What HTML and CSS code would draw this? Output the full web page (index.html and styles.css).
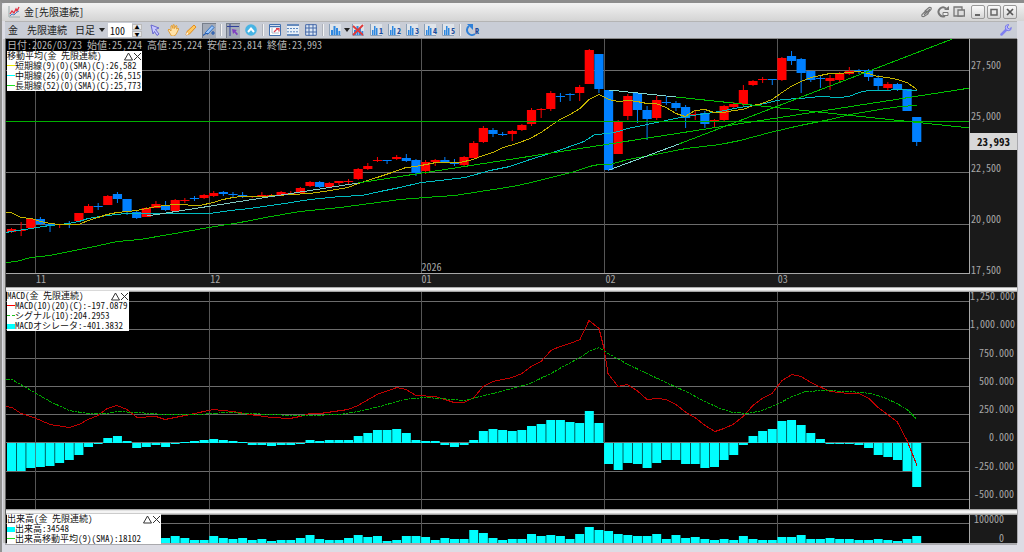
FILE: index.html
```
<!DOCTYPE html>
<html lang="ja">

<head>
    <meta charset="UTF-8">
    <meta name="viewport" content="width=device-width, initial-scale=1.0">
    <title>金[先限連続]</title>
    <link rel="stylesheet" href="styles.css">
</head>

<body>

    <div class="window">
        <div class="title-bar">
            <svg class="app-icon" viewBox="0 0 12 12"><path d="M1 0v11h11" fill="none" stroke="#9aa" /><path d="M2 8l2-3 2 2 2-4 1 2 2-4" fill="none" stroke="#e03040" stroke-width="1.3" /><path d="M2 10l2-2 2 1 3-3 2-1" fill="none" stroke="#4a80c8" /></svg>
            <h1>金[先限連続]</h1>
            <div class="title-tools">
                <button aria-label="リンク"><svg viewBox="0 0 12 12"><g fill="none" stroke="#777" stroke-width="1.1"><path d="M4 5l4-3.500q3-.5 2 2L7 7H4zM8 5l-4 .5-3 3q-1 2.500 2 2L7 8zM3 9l6-6" /></g></svg></button>
                <button aria-label="更新"><svg viewBox="0 0 12 12"><path d="M9 2.500A4.500 4.500 0 1 0 8 10" fill="none" stroke="#777" stroke-width="2" /><path d="M7 4h5V0z" fill="#777" /><path d="M6 6.500h5v3H6z" fill="#eee" stroke="#777" /></svg></button>
                <button aria-label="複製"><svg viewBox="0 0 12 12"><g fill="#ddd" stroke="#777" stroke-width="1.3"><path d="M1 1h8v9H1z" /><path d="M5 4h6.400v6H5z" /></g></svg></button>
            </div>
            <div class="window-buttons">
                <button aria-label="最小化"><svg viewBox="0 0 12 12"><path d="M3 9h5" stroke="#666" stroke-width="2" /></svg></button>
                <button aria-label="最大化"><svg viewBox="0 0 12 12"><path d="M3 3.500h6v5.500H3z" fill="none" stroke="#666" stroke-width="1.5" /></svg></button>
                <button aria-label="閉じる"><svg viewBox="0 0 12 12"><path d="M3 3l6 6M9 3l-6 6" stroke="#555" stroke-width="1.7" /></svg></button>
            </div>
        </div>

        <div class="toolbar">
            <span class="symbol">金</span>
            <span class="contract">先限連続</span>
            <select class="period" aria-label="足種">
                <option>日足</option>
            </select>
            <input class="count" type="number" value="100" aria-label="表示本数">
            <div class="spinner">
                <button aria-label="増やす">&#9650;</button>
                <button aria-label="減らす">&#9660;</button>
            </div>

            <div class="tools">
                <button aria-label="選択"><svg viewBox="0 0 12 12"><path d="M2 1l8 3-3.500 1.500L10 10l-2 1.500L5.500 7.500 4 10z" fill="#c8c8ff" stroke="#6868d0" /></svg></button>
                <button aria-label="移動"><svg viewBox="0 0 12 12"><path d="M1 6l1-1 2 2V2l1-.5 1 3V.8l1.200 0 .3 3.700L9 1.500l1 .5-.5 3L11 4l.7 1L9 10.500 7 12H4.500z" fill="#ffe2a8" stroke="#e09a30" stroke-width=".9" /></svg></button>
                <button aria-label="描画"><svg viewBox="0 0 12 12"><path d="M1 11l1-3.500L9 1l2 2-6.500 7z" fill="#ffc860" stroke="#e08c20" /><path d="M1 11l1-3 1.500 2.200z" fill="#fff" /></svg></button>
                <button class="pressed" aria-label="トレンドライン"><svg viewBox="0 0 12 12"><path d="M2 9l7-7.500 2 2L5 10z" fill="#9cc8ff" stroke="#3070c0" /><path d="M0 11.500q3-3 5-1.500M8 9h4M10 7v4" fill="none" stroke="#2058b0" stroke-width="1.2" /></svg></button>
                <span class="separator"></span>
                <button class="pressed" aria-label="カーソル"><svg viewBox="0 0 12 12"><path d="M3 0v12M0 2.500h12" stroke="#30409a" /><path d="M5 5l5 1-1.500 1.200L11 10l-1.300 1.200L7.500 8.500 6 10z" fill="#8040c0" /></svg></button>
                <button aria-label="先頭へ"><svg viewBox="0 0 12 12"><circle cx="6" cy="6" r="5.800" fill="#48b4e4" /><path d="M3 8l3-3.500L9 8" fill="none" stroke="#fff" stroke-width="2" /></svg></button>
                <span class="separator"></span>
                <button aria-label="チャート設定"><svg viewBox="0 0 12 12"><path d="M.5.5h11v11H.5z" fill="#fff" stroke="#4070b0" /><path d="M.5 2.500h11" stroke="#4070b0" stroke-width="1.5" /><path d="M3 4v5h7" fill="none" stroke="#abc" /><path d="M5 8l2-2 3-1.500M7 4.500h3v3" fill="none" stroke="#e04050" stroke-width="1.2" /></svg></button>
                <button aria-label="横グリッド"><svg viewBox="0 0 12 12"><path d="M0 0h12v12H0z" fill="#e8f0f8" /><path d="M0 1h12M0 11h12" stroke="#3a68a8" stroke-width="1.6" /><path d="M0 4.500h12M0 7.800h12" stroke="#5a88c0" stroke-dasharray="2 1" /></svg></button>
                <button aria-label="グリッド"><svg viewBox="0 0 12 12"><path d="M.7.7h10.600v10.600H.7zM0 4h12M0 8h12M4 0v12M8 0v12" fill="#dde8f4" stroke="#4468a8" /></svg></button>
                <span class="separator"></span>
                <button aria-label="チャート種類"><svg viewBox="0 0 12 12"><use href="#bars" /></svg></button>
                <span class="arrow"></span>
                <button aria-label="チャート削除"><svg viewBox="0 0 12 12"><use href="#bars" /><path d="M1 2l10 9M11 1L1 11" stroke="#e03838" stroke-width="1.8" /></svg></button>
                <button aria-label="チャート1"><svg viewBox="0 0 12 12"><use href="#short-bars" /></svg><b>1</b></button>
                <button aria-label="チャート2"><svg viewBox="0 0 12 12"><use href="#short-bars" /></svg><b>2</b></button>
                <button aria-label="チャート3"><svg viewBox="0 0 12 12"><use href="#short-bars" /></svg><b>3</b></button>
                <button aria-label="チャート4"><svg viewBox="0 0 12 12"><use href="#short-bars" /></svg><b>4</b></button>
                <button aria-label="チャート5"><svg viewBox="0 0 12 12"><use href="#short-bars" /></svg><b>5</b></button>
                <span class="separator"></span>
                <button aria-label="再読込"><svg viewBox="0 0 12 12"><path d="M3 2a5 5 0 1 0 6 8" fill="none" stroke="#2f80d8" stroke-width="2" /><path d="M1 0h6v6z" fill="#2f80d8" /></svg><b>R</b></button>
            </div>
            <button class="settings" aria-label="設定"><svg viewBox="0 0 12 12"><path d="M1.500 10.500L7 5" stroke="#8080f0" stroke-width="2.5" stroke-linecap="round" /><path d="M9 .8A3 3 0 1 0 11.300 3.500L9.500 5 7.500 4l0-2z" fill="#b8b8ff" stroke="#7070e8" stroke-width=".9" /></svg></button>
        </div>

        <div class="charts">
            <!-- Price -->
            <div class="price">
                <div class="plot">
                    <svg id="price" viewBox="6 39 963 234" preserveAspectRatio="none"></svg>
                    <p class="quote">日付:2026/03/23 始値:25,224 高値:25,224 安値:23,814 終値:23,993</p>
                    <div class="legend price-legend">
                        <div class="legend-title">移動平均(金 先限連続)
                            <span class="legend-buttons"><button aria-label="折りたたむ"><svg viewBox="0 0 9 9"><use href="#fold" /></svg></button><button aria-label="閉じる"><svg viewBox="0 0 9 9"><use href="#cross" /></svg></button></span>
                        </div>
                        <div><i class="line yellow"></i>短期線(9)(0)(SMA)(C):26,582</div>
                        <div><i class="line cyan"></i>中期線(26)(0)(SMA)(C):26,515</div>
                        <div><i class="line lime"></i>長期線(52)(0)(SMA)(C):25,773</div>
                    </div>
                </div>
                <ol class="months">
                    <li></li>
                    <li>11</li>
                    <li>12</li>
                    <li><span class="year">2026</span>01</li>
                    <li>02</li>
                    <li>03</li>
                </ol>
            </div>
            <div class="axis price-axis">
                <span>27,500</span>
                <span>25,000</span>
                <span>22,500</span>
                <span>20,000</span>
                <span>17,500</span>
                <strong class="last-price">23,993</strong>
            </div>

            <div class="splitter"></div>

            <!-- MACD -->
            <div class="plot">
                <svg id="macd" viewBox="6 292 963 217" preserveAspectRatio="none"></svg>
                <div class="legend macd-legend">
                    <div class="legend-title">MACD(金 先限連続)
                        <span class="legend-buttons"><button aria-label="折りたたむ"><svg viewBox="0 0 9 9"><use href="#fold" /></svg></button><button aria-label="閉じる"><svg viewBox="0 0 9 9"><use href="#cross" /></svg></button></span>
                    </div>
                    <div><i class="line red"></i>MACD(10)(20)(C):-197.0879</div>
                    <div><i class="line dashed"></i>シグナル(10):204.2953</div>
                    <div><i class="block"></i>MACDオシレータ:-401.3832</div>
                </div>
            </div>
            <div class="axis macd-axis">
                <span>1,250.000</span>
                <span>1,000.000</span>
                <span>750.000</span>
                <span>500.000</span>
                <span>250.000</span>
                <span>0.000</span>
                <span>-250.000</span>
                <span>-500.000</span>
            </div>

            <div class="splitter"></div>

            <!-- Volume -->
            <div class="plot">
                <svg id="volume" viewBox="6 515 963 28" preserveAspectRatio="none"></svg>
                <div class="legend volume-legend">
                    <div class="legend-title">出来高(金 先限連続)
                        <span class="legend-buttons"><button aria-label="折りたたむ"><svg viewBox="0 0 9 9"><use href="#fold" /></svg></button><button aria-label="閉じる"><svg viewBox="0 0 9 9"><use href="#cross" /></svg></button></span>
                    </div>
                    <div><i class="block"></i>出来高:34548</div>
                    <div><i class="line lime"></i>出来高移動平均(9)(SMA):18102</div>
                </div>
            </div>
            <div class="axis volume-axis">
                <span>100000</span>
                <span>0</span>
            </div>
        </div>
    </div>

    <svg class="symbols">
        <symbol id="bars" viewBox="0 0 12 12"><path d="M0 0h12v12H0z" fill="#dfe4ea" /><path d="M.5 0v11.500H12" fill="none" stroke="#8aa0b8" /><path d="M2 6h2v5H2zM4.500 2h2v9h-2zM7 4h2v7H7zM9.500 7h1.800v4H9.500z" fill="#2f88e0" /></symbol>
        <symbol id="short-bars" viewBox="0 0 12 12"><path d="M0 0h12v12H0z" fill="#dfe4ea" /><path d="M.5 0v11.500H12" fill="none" stroke="#8aa0b8" /><path d="M2 6h1.500v5H2zM4 2h1.500v9H4zM6 4h1.500v7H6z" fill="#2f88e0" /></symbol>
        <symbol id="fold" viewBox="0 0 9 9"><path d="M4.500 1L8.500 8h-8z" fill="none" stroke="#333" /></symbol>
        <symbol id="cross" viewBox="0 0 9 9"><path d="M1 1l7 7M8 1L1 8" stroke="#333" /></symbol>
    </svg>

    <script src="chart.js"></script>
</body>

</html>
```

FILE: styles.css
```
* {
    box-sizing: border-box;
}

body {
    margin: 0;
    background-color: #dcdce4;
    font-family: "Noto Sans CJK JP", sans-serif;
    font-size: 10px;
    line-height: 12px;
    font-feature-settings: "hwid";
}

h1, p, ol {
    margin: 0;
    padding: 0;
    font-size: 10px;
    font-weight: normal;
}

button {
    margin: 0;
    padding: 0;
    border: none;
    background: none;
    font: inherit;
}

svg {
    display: block;
}

.symbols {
    position: absolute;
    width: 0;
    height: 0;
}

.window {
    display: flex;
    flex-direction: column;
    height: 100vh;
    min-height: 400px;
    border-top: 3px solid #8c8c8c;
    border-left: 2px solid #929292;
}

/* Title bar */
.title-bar {
    display: flex;
    align-items: center;
    height: 18px;
    flex: none;
    padding: 0 7px 0 6px;
    border-radius: 4px 0 0 0;
    background: linear-gradient(#f2f2f2, #d4d4d4);
    color: #222;
}

.title-bar svg {
    width: 12px;
    height: 12px;
}

.title-bar h1 {
    margin-left: 4px;
}

.title-tools {
    display: flex;
    gap: 4px;
    margin-left: auto;
}

.window-buttons {
    display: flex;
    gap: 2px;
    margin-left: 6px;
}

.window-buttons button {
    width: 14px;
    height: 14px;
    border: 1px solid #999;
    border-radius: 2px;
    background: linear-gradient(#fafafa, #d6d6d6);
}

/* Toolbar */
.toolbar {
    display: flex;
    align-items: center;
    height: 18px;
    flex: none;
    margin: 0 7px 0 3px;
    padding: 0 5px 0 3px;
    border-top: 1px solid #b4b4b4;
    border-bottom: 1px solid #8a8a8a;
    background-color: #c9cdd6;
    color: #222;
}

.contract {
    margin-left: 9px;
}

.period {
    width: 30px;
    margin: 0 3px 0 8px;
    padding: 0;
    border: none;
    appearance: none;
    background: url("data:image/svg+xml,%3Csvg xmlns='http://www.w3.org/2000/svg' viewBox='0 0 6 4'%3E%3Cpath d='M0 0h6L3 4z' fill='%23222'/%3E%3C/svg%3E") right center / 6px 4px no-repeat;
    color: inherit;
    font: inherit;
}

.arrow {
    width: 6px;
    height: 4px;
    margin-right: -1px;
    background: #222;
    clip-path: polygon(0 0, 100% 0, 50% 100%);
}

.count {
    width: 24px;
    height: 14px;
    padding: 0 2px;
    border: none;
    background-color: white;
    font: inherit;
    color: #111;
    appearance: textfield;
    font-feature-settings: inherit;
}

.count::-webkit-inner-spin-button {
    display: none;
}

.spinner {
    display: flex;
    flex-direction: column;
    gap: 1px;
    width: 10px;
}

.spinner button {
    height: 6px;
    border: 1px solid #bbb;
    background-color: #e8e8e8;
    font-size: 5px;
    line-height: 4px;
}

.tools {
    display: flex;
    align-items: center;
    margin-left: 4px;
}

.tools button {
    display: grid;
    place-items: center;
    position: relative;
    width: 18px;
    height: 15px;
}

.tools svg, .settings svg {
    width: 12px;
    height: 12px;
}

.tools .pressed {
    width: 14px;
    margin: 0 2px;
    background-color: #a4abb8;
    box-shadow: inset 1px 1px #777f8c;
}

.tools b {
    position: absolute;
    right: 2px;
    bottom: 3px;
    color: #174a9c;
    font-size: 8px;
    line-height: 8px;
}

.separator {
    width: 2px;
    height: 12px;
    margin: 0 2px;
    border-left: 1px solid #aeb2ba;
    background-color: #f4f4f4;
}

.settings {
    margin-left: auto;
}

/* Charts */
.charts {
    display: grid;
    grid-template-columns: 1fr 47px;
    grid-template-rows: 248fr 5px 217fr 6px 28fr;
    flex: 1;
    min-height: 0;
    margin: 0 7px 9px 3px;
    border-left: 1px solid #666;
    box-shadow: 0 2px #a9a9ad, 1px 0 #a9a9ad, -2px 0 #c4c4c4;
    background-color: black;
    color: #a8a8a8;
}

.price {
    display: grid;
    grid-template-rows: 1fr 14px;
    min-height: 0;
}

.plot {
    position: relative;
    min-height: 0;
    border-right: 1px solid #a8a8a8;
}

.plot > svg {
    position: absolute;
    width: 100%;
    height: 100%;
}

.plot line, .plot polyline {
    shape-rendering: crispEdges;
}

.quote {
    position: absolute;
    top: 0;
    left: 1px;
    color: #b8b8b8;
}

.months {
    display: grid;
    grid-template-columns: 30fr 174fr 211fr 184fr 172fr 192fr;
    border-top: 1px solid #a8a8a8;
    background-color: #1a1a1a;
    list-style: none;
    line-height: 10px;
}

.months li {
    position: relative;
}

.year {
    position: absolute;
    bottom: 15px;
}

.axis {
    display: flex;
    flex-direction: column;
    justify-content: space-between;
    background-color: #1a1a1a;
    line-height: 10px;
}

.price-axis {
    position: relative;
    padding: 21px 0 12px 1px;
}

.last-price {
    position: absolute;
    top: 38%;
    left: 0;
    right: 0;
    padding: 3px 0 4px 7px;
    background-color: #d8d8d8;
    color: #111;
    font-size: 11px;
}

.macd-axis {
    padding: 0 3px 11px 0;
    line-height: 8px;
    text-align: right;
}

.volume-axis {
    padding: 0 13px 1px 0;
    line-height: 8px;
    text-align: right;
}

.splitter {
    grid-column: 1 / -1;
    background: linear-gradient(#888, #f4f4f4 30%, #f4f4f4 60%, #888);
}

/* Legends */
.legend {
    position: absolute;
    left: 1px;
    background-color: white;
    color: #111;
    font-size: 9px;
    line-height: 10px;
    white-space: nowrap;
}

.legend > div {
    display: flex;
    align-items: center;
}

.price-legend {
    top: 12px;
    width: 135px;
}

.macd-legend {
    top: -1px;
    width: 122px;
}

.volume-legend {
    top: -1px;
    width: 154px;
}

.legend-buttons {
    display: flex;
    margin-left: auto;
}

.legend-buttons svg {
    width: 9px;
    height: 9px;
}

.line, .block {
    flex: none;
    width: 8px;
    height: 2px;
    border-top: 1px solid;
}

.block {
    height: 5px;
    background-color: cyan;
    border: none;
}

.yellow {
    color: #f0f000;
}

.cyan {
    color: cyan;
}

.lime {
    color: #20e020;
}

.red {
    color: red;
}

.dashed {
    border-top-style: dashed;
    color: #20c020;
}
```

FILE: chart.js
```
const STEP = 9.63;
const FIRST = 11.5;
const MONTHS = [35.5, 209.5, 421.5, 604.5, 777.5];

// colour, body top, body bottom, high, low
const candles = [
    ['r', 229, 232, 228, 233], ['r', 230, 231, 222, 236], ['r', 219, 228, 219, 228], ['b', 219, 224, 217, 225],
    ['b', 224, 226, 223, 232], ['r', 224, 225, 224, 228], ['b', 224, 225, 221, 228], ['r', 213, 221, 213, 222],
    ['r', 206, 213, 204, 213], ['b', 206, 207, 203, 210], ['r', 196, 205, 195, 205], ['b', 194, 199, 192, 203],
    ['b', 199, 212, 199, 215], ['b', 212, 218, 211, 219], ['r', 208, 217, 207, 217], ['r', 204, 208, 201, 208],
    ['b', 206, 210, 201, 211], ['r', 200, 211, 199, 212], ['r', 200, 201, 198, 203], ['b', 198, 199, 196, 201],
    ['r', 195, 198, 194, 199], ['r', 193, 196, 191, 197], ['b', 192, 194, 191, 196], ['b', 194, 195, 192, 197],
    ['b', 195, 197, 192, 198], ['r', 196, 197, 196, 198], ['r', 195, 196, 192, 197], ['r', 195, 196, 194, 197],
    ['r', 192, 195, 191, 196], ['r', 193, 194, 191, 195], ['r', 188, 193, 187, 193], ['r', 182, 186, 181, 187],
    ['b', 182, 187, 181, 188], ['r', 183, 187, 182, 188], ['r', 181, 183, 181, 185], ['r', 181, 182, 179, 184],
    ['r', 169, 179, 168, 180], ['r', 166, 169, 163, 170], ['r', 160, 161, 157, 162], ['b', 160, 161, 160, 164],
    ['r', 157, 159, 155, 160], ['b', 158, 161, 154, 162], ['b', 160, 173, 159, 176], ['r', 162, 171, 160, 174],
    ['r', 160, 162, 159, 166], ['b', 160, 162, 157, 163], ['b', 162, 164, 159, 166], ['r', 157, 165, 156, 166],
    ['r', 143, 158, 141, 158], ['r', 128, 142, 126, 143], ['b', 130, 134, 128, 137], ['b', 134, 135, 132, 136],
    ['r', 131, 134, 130, 141], ['r', 125, 130, 124, 131], ['r', 110, 124, 108, 126], ['r', 109, 110, 108, 118],
    ['r', 93, 109, 91, 111], ['b', 96, 97, 93, 102], ['b', 94, 95, 93, 101], ['r', 87, 93, 85, 101],
    ['r', 50, 84, 49, 84], ['b', 54, 89, 54, 93], ['b', 90, 170, 90, 171], ['r', 122, 154, 120, 154],
    ['r', 96, 116, 94, 120], ['b', 93, 110, 92, 123], ['b', 110, 119, 106, 140], ['r', 100, 118, 96, 120],
    ['b', 102, 103, 96, 105], ['b', 103, 108, 101, 111], ['b', 107, 118, 105, 128], ['r', 114, 115, 110, 120],
    ['b', 113, 124, 111, 128], ['r', 120, 122, 119, 128], ['r', 106, 120, 105, 121], ['r', 104, 107, 102, 109],
    ['r', 90, 104, 85, 107], ['r', 81, 85, 80, 86], ['r', 79, 80, 77, 83], ['b', 79, 80, 79, 85],
    ['r', 58, 80, 57, 81], ['b', 56, 61, 51, 65], ['b', 59, 73, 58, 93], ['b', 71, 80, 71, 82],
    ['b', 78, 79, 76, 88], ['r', 78, 81, 75, 90], ['r', 73, 80, 72, 83], ['r', 71, 74, 67, 75],
    ['b', 70, 71, 69, 74], ['b', 70, 77, 69, 81], ['b', 78, 86, 75, 90], ['r', 84, 88, 82, 90],
    ['b', 84, 89, 83, 91], ['b', 89, 111, 89, 111], ['b', 117, 142, 117, 146]
];

const shortMa = '6,212 11,212 21,217 31,218 41,221 50,223 60,224 79,224 88,220 98,217 107,214 117,212 137,210 156,206 175,204 200,205 213,202 223,199 233,197 242,196 262,196 291,194 310,193 330,190 348,187 358,183 377,177 392,172 406,167 416,166 426,164 436,162 460,162 473,159 483,155 493,152 503,147 517,143 530,138 541,132 551,125 560,119 570,114 580,108 589,99 599,94 609,99 618,101 628,100 637,101 647,103 656,103 666,107 676,113 685,116 695,110 705,109 714,112 724,112 733,110 743,109 753,105 762,103 772,99 782,92 791,86 801,81 811,77 820,75 830,73 840,73 849,72 859,71 868,73 878,76 888,77 897,79 907,82 917,89';
const middleMa = '6,232 11,231 31,228 50,225 69,223 79,221 88,218 107,215 126,213 210,213 230,210 250,208 271,205 291,202 310,199 340,196 362,195 380,191 400,187 421,182 440,180 465,177 490,170 510,166 530,159 550,153 570,146 584,141 595,134 609,133 618,131 628,128 647,124 666,120 685,116 700,114 714,112 740,107 760,104 782,99 800,98 820,96 840,97 849,96 859,92 868,90 885,90 897,89 917,90';
const longMa = '6,262 16,261 31,257 50,255 69,251 90,247 117,241 140,239 175,233 209,227 240,222 271,216 300,211 340,207 370,203 400,199 425,197 455,195 480,191 500,188 518,185 535,181 555,176 575,171 589,166 599,164 610,164 628,159 656,154 686,148 720,144 740,140 770,132 800,125 830,119 850,114 880,109 900,106 917,105';

const macdLine = '6,406 12,407 21,413 31,416 41,420 50,424 69,427 79,424 88,419 98,415 107,408 117,405 127,409 137,417 156,416 165,419 190,414 213,409 233,411 250,414 271,417 290,418 300,416 310,413 320,413 348,409 358,405 377,394 397,387 406,389 416,395 435,396 445,399 454,402 464,402 474,397 483,386 493,381 512,377 522,373 531,366 541,361 551,350 560,346 570,343 580,339 589,320 599,328 604,348 608,373 618,386 627,384 637,390 647,399 657,398 666,399 676,404 686,412 695,417 705,425 715,431 724,428 733,424 743,416 753,405 762,398 772,393 782,380 792,374 801,376 811,382 830,391 849,393 859,393 869,398 878,407 897,421 907,440 917,465';
const signalLine = '6,379 12,379 31,390 50,401 69,410 88,413 107,413 117,411 137,412 165,414 200,414 225,412 250,413 271,414 290,415 310,415 340,414 358,411 380,406 404,399 425,397 440,398 465,400 480,396 493,393 512,388 530,383 551,373 565,365 580,357 589,351 599,347 608,353 628,364 647,373 666,382 686,391 705,401 720,408 733,412 748,413 762,410 777,404 792,396 806,391 825,390 849,391 872,393 886,398 897,403 907,409 917,419';

const oscillator = [
    471, 471, 468, 467, 466, 463, 460, 455, 447, 444, 438, 436, 441, 448, 447, 445, 447, 444, 442, 441,
    440, 439, 440, 441, 442, 445, 445, 446, 445, 445, 444, 440, 441, 440, 440, 440, 436, 433, 430, 430,
    429, 433, 440, 441, 441, 445, 447, 445, 440, 431, 429, 430, 431, 430, 426, 424, 420, 420, 422, 423,
    411, 423, 464, 470, 463, 464, 468, 463, 460, 460, 464, 464, 468, 467, 460, 455, 445, 436, 431, 429,
    421, 420, 425, 433, 439, 443, 444, 444, 445, 448, 455, 457, 460, 471, 487
];

const volumes = [
    538, 539, 538, 537, 538, 539, 538, 536, 537, 538, 536, 537, 536, 538, 539, 539, 538, 536, 538, 540,
    540, 536, 538, 539, 538, 540, 539, 541, 540, 540, 538, 535, 539, 540, 540, 538, 535, 537, 536, 541,
    540, 536, 536, 537, 540, 538, 539, 539, 530, 533, 538, 540, 539, 539, 534, 536, 535, 536, 539, 534,
    527, 530, 531, 534, 535, 536, 536, 534, 539, 535, 538, 537, 539, 540, 539, 540, 536, 539, 540, 540,
    537, 537, 535, 539, 539, 538, 539, 539, 540, 540, 539, 540, 541, 539, 536
];

function center(i) {
    return FIRST + STEP * i;
}

function line(x1, y1, x2, y2, color) {
    return `<line x1="${x1}" y1="${y1}" x2="${x2}" y2="${y2}" stroke="${color}" />`;
}

function polyline(points, color, dash) {
    return `<polyline points="${points}" fill="none" stroke="${color}" stroke-dasharray="${dash || 'none'}" transform="translate(0 .5)" />`;
}

function grid(rows, top, bottom) {
    let out = '';
    rows.forEach(y => out += line(6, y, 970, y, '#6c6c6c'));
    MONTHS.forEach(x => out += line(x, top, x, bottom, '#565656'));
    return out;
}

function bars(values, base) {
    let out = '';
    values.forEach((y, i) => {
        const x = center(i) - 4.5;
        const height = Math.max(Math.abs(y - base), 1);
        out += `<rect x="${x}" y="${Math.min(y, base)}" width="9" height="${height}" fill="#00ffff" />`;
    });
    return out;
}

function drawPrice() {
    let out = grid([70.5, 121.5, 172.5, 224.5], 39, 273);
    candles.forEach(([type, top, bottom, high, low], i) => {
        const x = center(i);
        const color = type === 'r' ? '#ff0000' : '#0080ff';
        out += `<rect x="${x - 0.5}" y="${high}" width="1" height="${low - high}" fill="${color}" />`;
        out += `<rect x="${x - 4.6}" y="${top}" width="9.2" height="${bottom - top}" fill="${color}" />`;
    });
    out += polyline(longMa, '#00b800');
    out += polyline(middleMa, '#00bcc0');
    out += polyline(shortMa, '#c4b400');

    // trend lines
    out += line(6, 121.5, 970, 121.5, '#00b000');
    out += line(147, 216, 358, 183, '#80c8c0') + line(358, 183, 970, 88, '#00c000');
    out += line(609, 90, 676, 97, '#80d8d0') + line(676, 97, 970, 128, '#00c000');
    out += line(609, 170, 679, 144, '#80d8d0') + line(679, 144, 955, 38, '#00c000');
    document.getElementById('price').innerHTML = out;
}

function drawMacd() {
    let out = grid([301.5, 329.5, 358.5, 386.5, 414.5, 442.5, 471.5, 499.5], 292, 509);
    out += bars(oscillator, 443);
    out += polyline(macdLine, '#c00000');
    out += polyline(signalLine, '#00a800', '4 1 2 1');
    document.getElementById('macd').innerHTML = out;
}

function drawVolume() {
    document.getElementById('volume').innerHTML = grid([523.5], 515, 543) + bars(volumes, 543);
}

drawPrice();
drawMacd();
drawVolume();
```
